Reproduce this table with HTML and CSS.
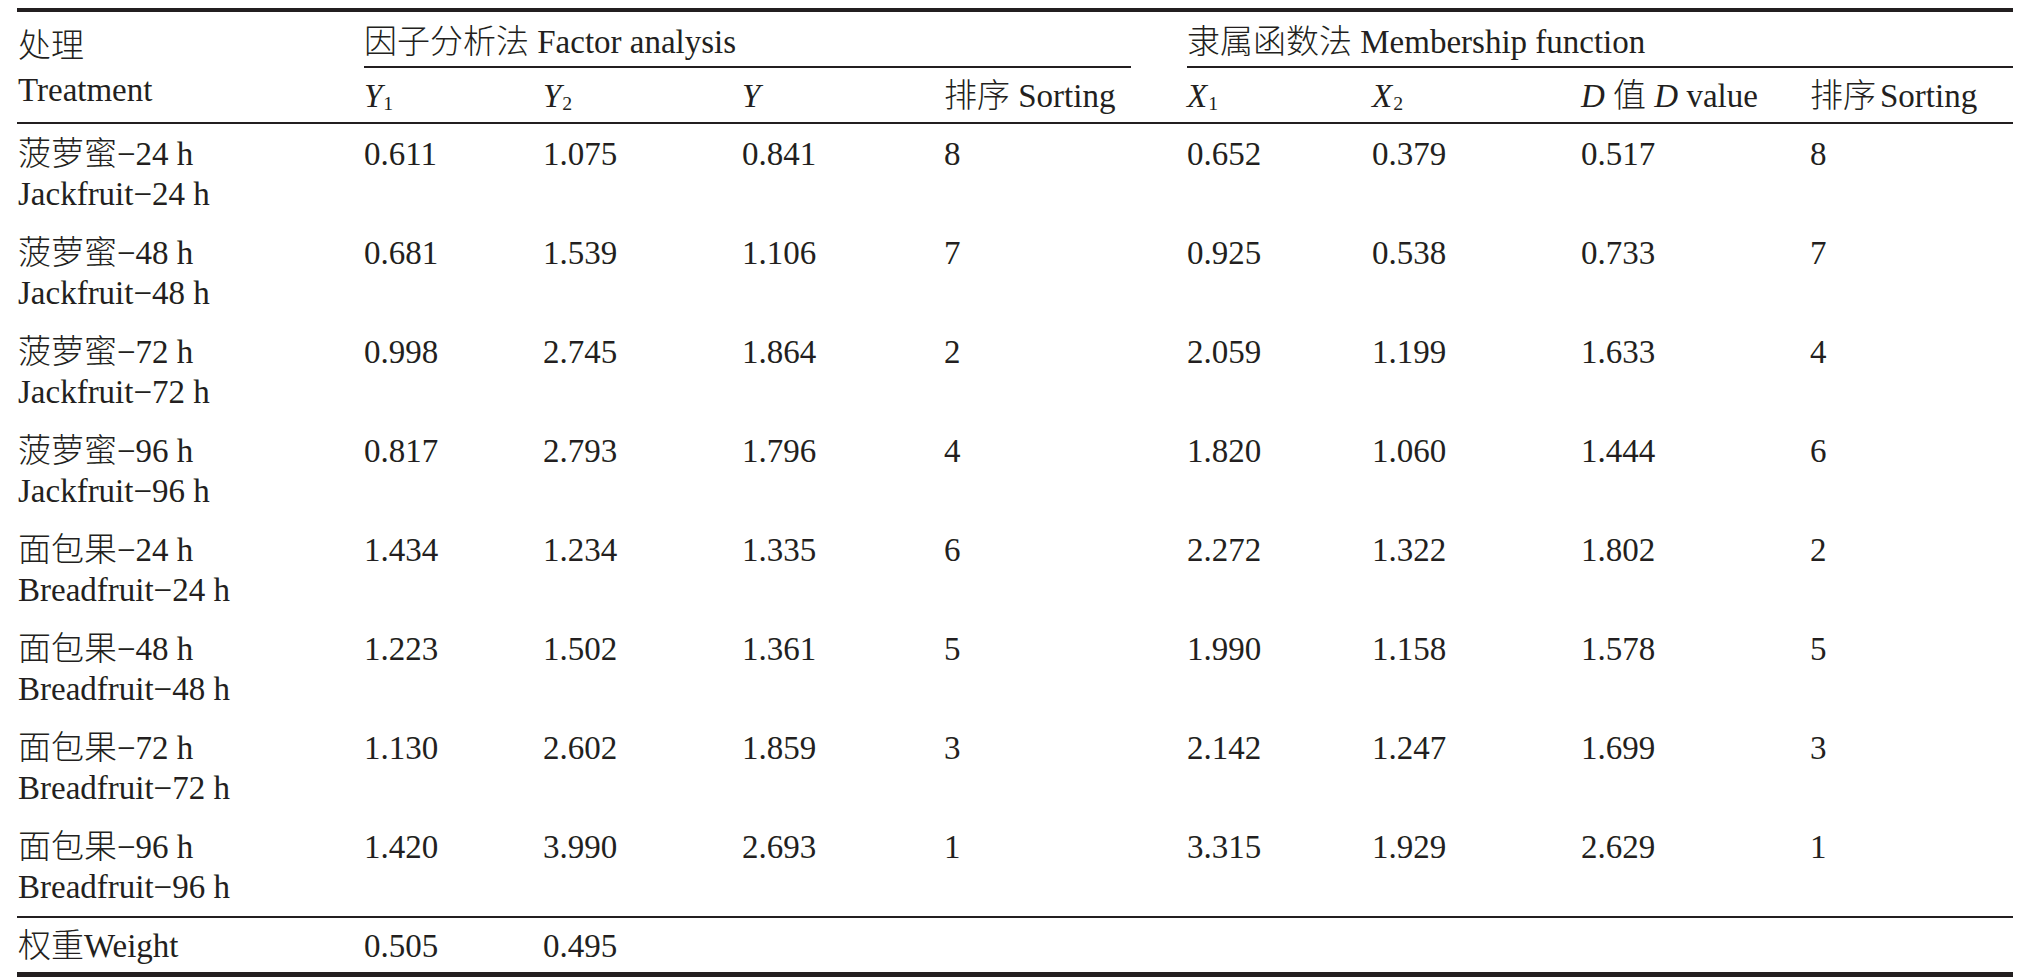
FILE: index.html
```html
<!DOCTYPE html>
<html lang="zh-CN">
<head>
<meta charset="utf-8">
<title>因子分析法与隶属函数法</title>
<link rel="stylesheet" href="styles.css">
</head>
<body>
<table class="tbl">
  <colgroup>
    <col class="c-treat">
    <col class="c-y1">
    <col class="c-y2">
    <col class="c-y">
    <col class="c-s1">
    <col class="c-gap">
    <col class="c-x1">
    <col class="c-x2">
    <col class="c-d">
    <col class="c-s2">
  </colgroup>
  <thead>
    <tr class="h1">
      <th class="treat-head" rowspan="2"><span class="zh">处理</span><br>Treatment</th>
      <th class="group" colspan="4"><span class="zh">因子分析法</span> Factor analysis</th>
      <th class="gap" rowspan="2"></th>
      <th class="group" colspan="4"><span class="zh">隶属函数法</span> Membership function</th>
    </tr>
    <tr class="h2">
      <th><i>Y</i><sub>1</sub></th>
      <th><i>Y</i><sub>2</sub></th>
      <th><i>Y</i></th>
      <th><span class="zh">排序</span> Sorting</th>
      <th><i>X</i><sub>1</sub></th>
      <th><i>X</i><sub>2</sub></th>
      <th><i>D</i> <span class="zh">值</span> <i>D</i> value</th>
      <th><span class="zh">排序</span><span class="nudge">Sorting</span></th>
    </tr>
  </thead>
  <tbody>
    <tr class="row">
      <td class="treat"><span class="zh">菠萝蜜</span>−24 h<br>Jackfruit−24 h</td>
      <td>0.611</td><td>1.075</td><td>0.841</td><td>8</td><td></td>
      <td>0.652</td><td>0.379</td><td>0.517</td><td>8</td>
    </tr>
    <tr class="row">
      <td class="treat"><span class="zh">菠萝蜜</span>−48 h<br>Jackfruit−48 h</td>
      <td>0.681</td><td>1.539</td><td>1.106</td><td>7</td><td></td>
      <td>0.925</td><td>0.538</td><td>0.733</td><td>7</td>
    </tr>
    <tr class="row">
      <td class="treat"><span class="zh">菠萝蜜</span>−72 h<br>Jackfruit−72 h</td>
      <td>0.998</td><td>2.745</td><td>1.864</td><td>2</td><td></td>
      <td>2.059</td><td>1.199</td><td>1.633</td><td>4</td>
    </tr>
    <tr class="row">
      <td class="treat"><span class="zh">菠萝蜜</span>−96 h<br>Jackfruit−96 h</td>
      <td>0.817</td><td>2.793</td><td>1.796</td><td>4</td><td></td>
      <td>1.820</td><td>1.060</td><td>1.444</td><td>6</td>
    </tr>
    <tr class="row">
      <td class="treat"><span class="zh">面包果</span>−24 h<br>Breadfruit−24 h</td>
      <td>1.434</td><td>1.234</td><td>1.335</td><td>6</td><td></td>
      <td>2.272</td><td>1.322</td><td>1.802</td><td>2</td>
    </tr>
    <tr class="row">
      <td class="treat"><span class="zh">面包果</span>−48 h<br>Breadfruit−48 h</td>
      <td>1.223</td><td>1.502</td><td>1.361</td><td>5</td><td></td>
      <td>1.990</td><td>1.158</td><td>1.578</td><td>5</td>
    </tr>
    <tr class="row">
      <td class="treat"><span class="zh">面包果</span>−72 h<br>Breadfruit−72 h</td>
      <td>1.130</td><td>2.602</td><td>1.859</td><td>3</td><td></td>
      <td>2.142</td><td>1.247</td><td>1.699</td><td>3</td>
    </tr>
    <tr class="row last">
      <td class="treat"><span class="zh">面包果</span>−96 h<br>Breadfruit−96 h</td>
      <td>1.420</td><td>3.990</td><td>2.693</td><td>1</td><td></td>
      <td>3.315</td><td>1.929</td><td>2.629</td><td>1</td>
    </tr>
    <tr class="weight">
      <td class="treat"><span class="zh">权重</span>Weight</td>
      <td>0.505</td><td>0.495</td><td></td><td></td><td></td>
      <td></td><td></td><td></td><td></td>
    </tr>
  </tbody>
</table>
</body>
</html>
```

FILE: styles.css
```css
html, body {
  margin: 0;
  padding: 0;
  background: #ffffff;
}

body {
  font-family: "Liberation Serif", "Noto Sans CJK SC", serif;
  font-size: 33px;
  color: #231f20;
}

.zh {
  font-family: "Noto Sans CJK SC", "Liberation Serif", sans-serif;
  font-weight: 300;
  line-height: 0;
}

.nudge {
  margin-left: 4px;
}

.tbl {
  margin: 8px 0 0 17px;
  width: 1996px;
  table-layout: fixed;
  border-collapse: separate;
  border-spacing: 0;
  border-top: 4px solid #231f20;
  border-bottom: 5px solid #231f20;
}

.c-treat { width: 347px; }
.c-y1 { width: 179px; }
.c-y2 { width: 199px; }
.c-y { width: 202px; }
.c-s1 { width: 187px; }
.c-gap { width: 56px; }
.c-x1 { width: 185px; }
.c-x2 { width: 209px; }
.c-d { width: 229px; }
.c-s2 { width: 203px; }

.tbl th,
.tbl td {
  padding: 0;
  text-align: left;
  vertical-align: top;
  font-weight: normal;
  line-height: 40px;
  white-space: nowrap;
}

.tbl i {
  font-style: italic;
}

.tbl sub {
  font-size: 0.6em;
  line-height: 0;
  vertical-align: -0.14em;
  margin-left: 1px;
}

/* header row 1 */
.h1 th {
  padding-top: 10px;
  padding-bottom: 4px;
}

.h1 .group {
  border-bottom: 2px solid #231f20;
}

.h1 .treat-head {
  padding: 12px 0 10px 1px;
  line-height: 44px;
  border-bottom: 2px solid #231f20;
}

.h1 .gap {
  border-bottom: 2px solid #231f20;
}

/* header row 2 */
.h2 th {
  padding-top: 8px;
  padding-bottom: 6px;
  border-bottom: 2px solid #231f20;
}

/* data rows */
.row td {
  padding-top: 10px;
  padding-bottom: 9px;
  height: 80px;
}

.row .treat {
  padding-left: 1px;
}

.row.last td {
  border-bottom: 2px solid #231f20;
}

/* weight row */
.weight td {
  padding-top: 8px;
  padding-bottom: 6px;
}

.weight .treat {
  padding-left: 1px;
}
```
